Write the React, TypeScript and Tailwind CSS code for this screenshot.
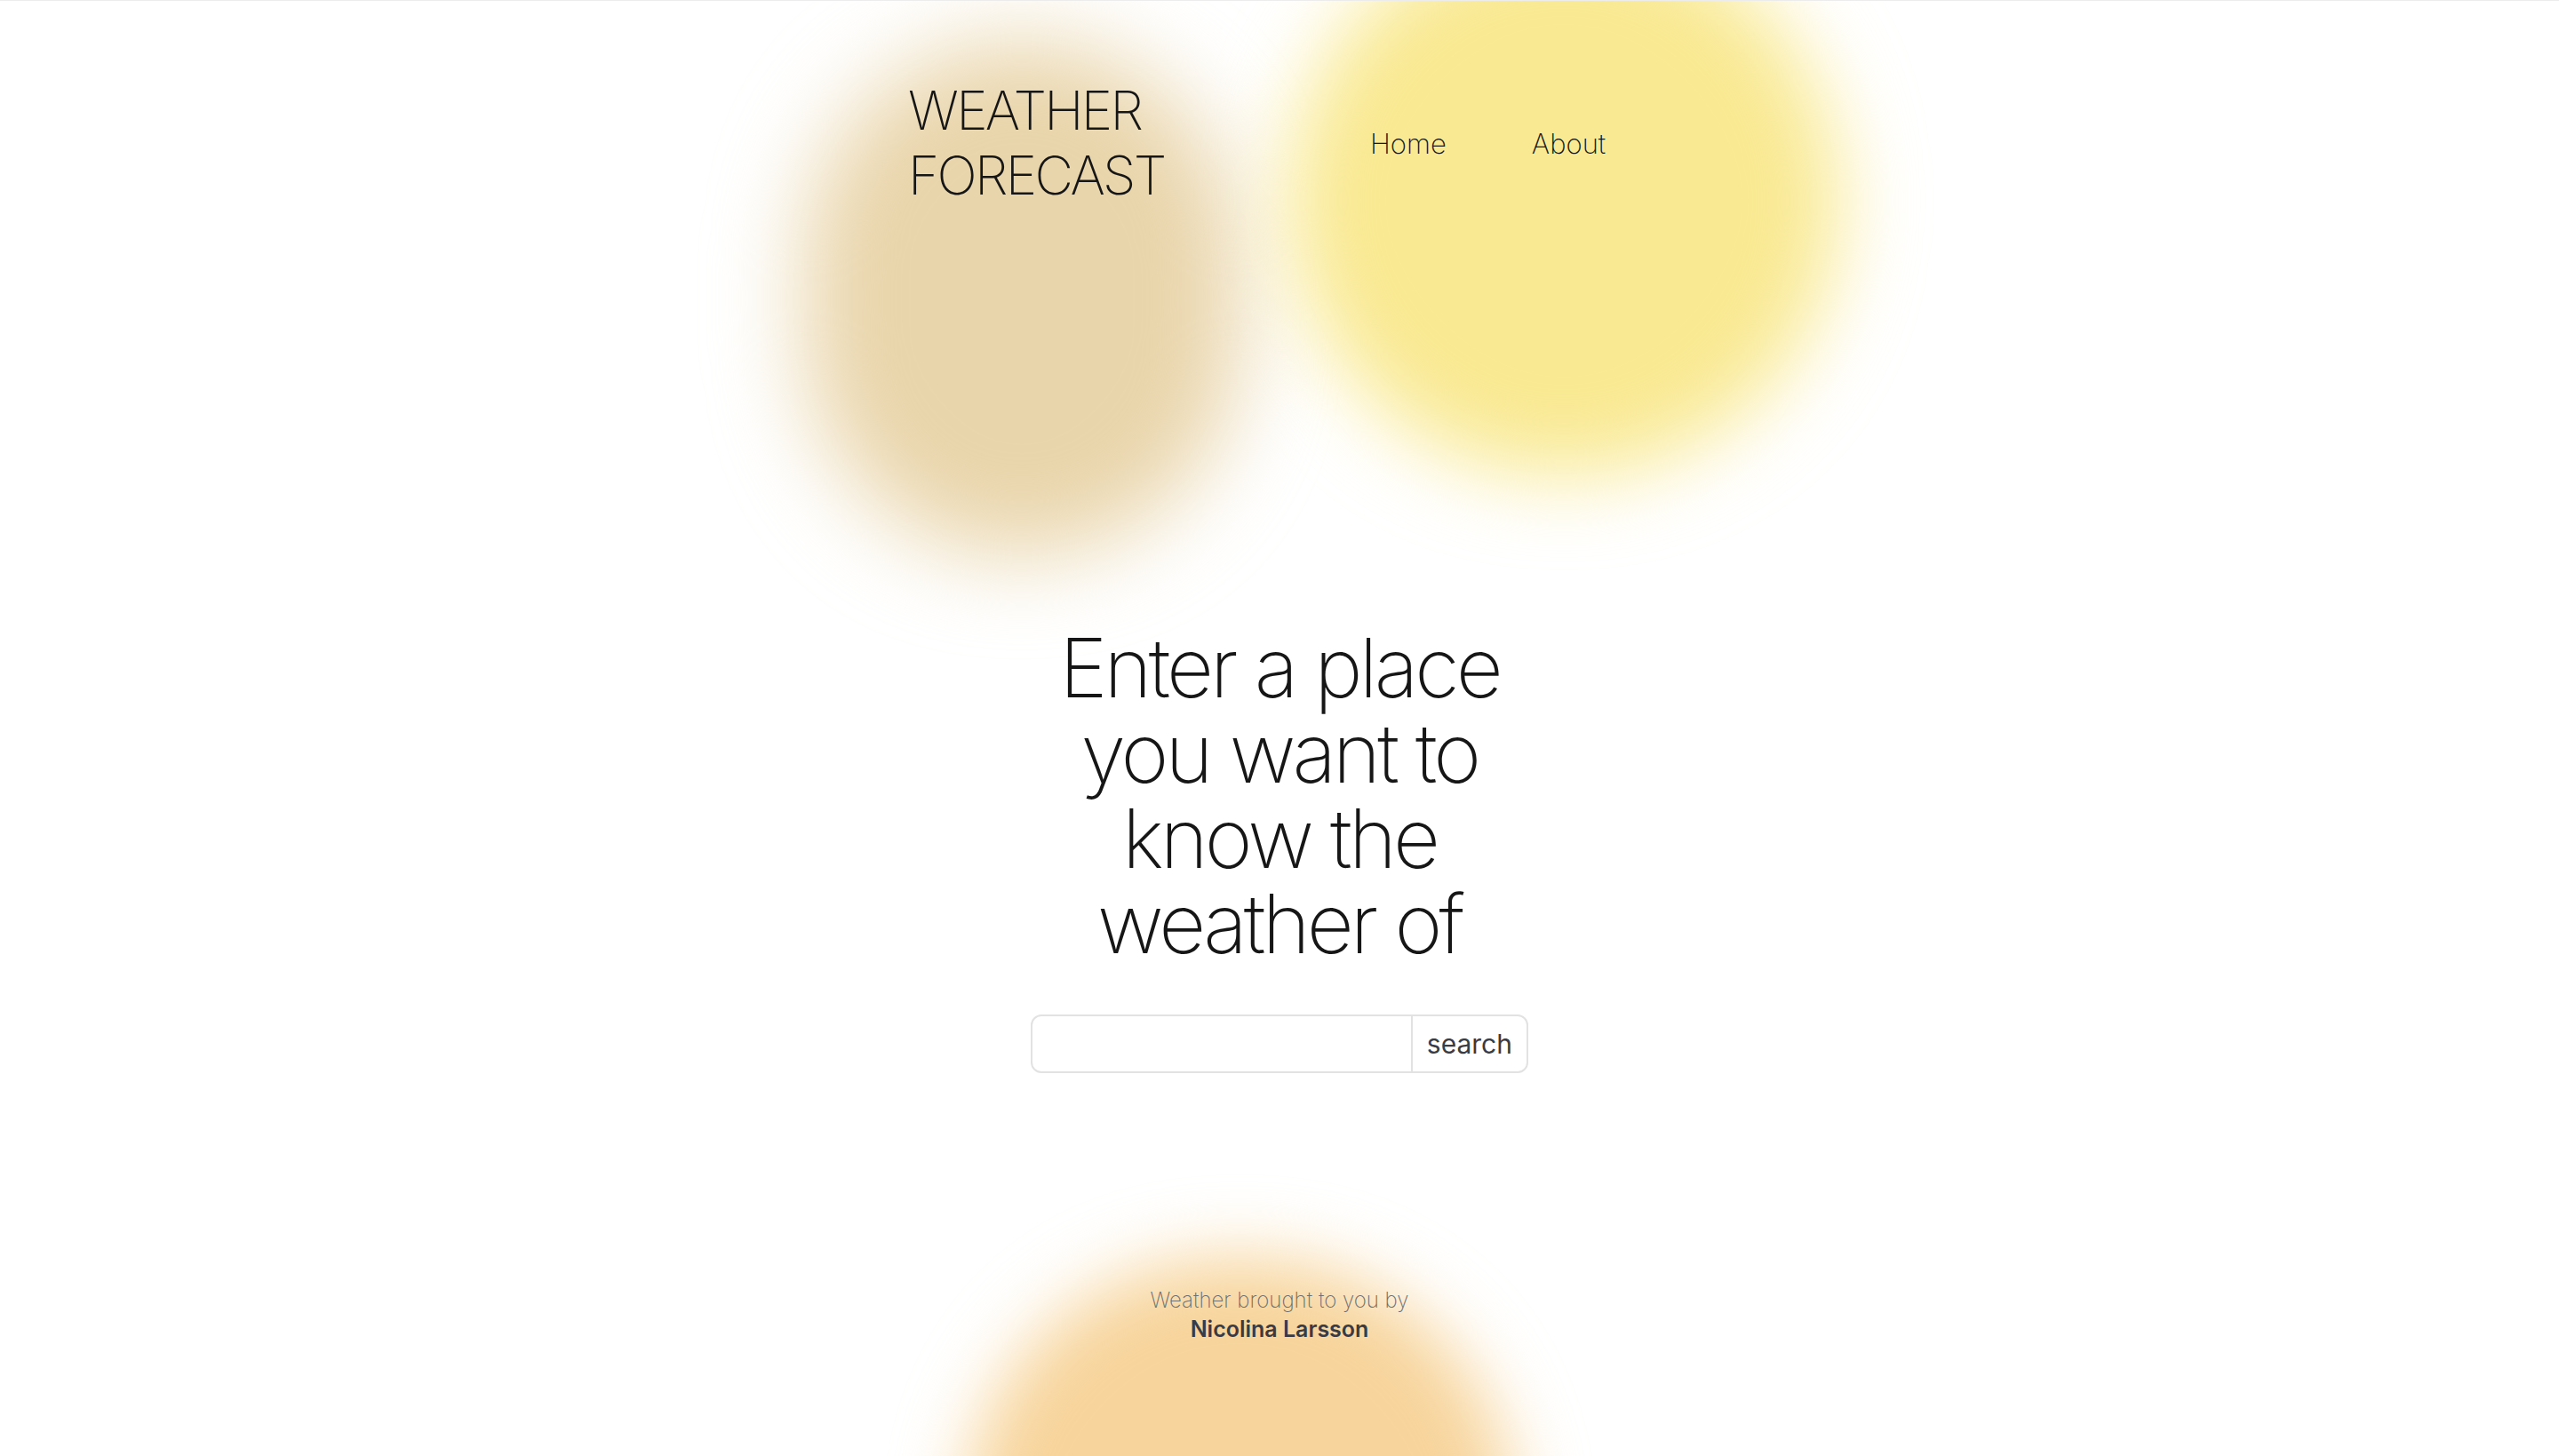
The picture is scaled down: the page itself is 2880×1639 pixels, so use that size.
export default function App() {
  return (
    <div className="relative min-h-screen overflow-hidden bg-white border-t border-[#ececec] font-['Inter',sans-serif] text-[#161616]">
      {/* blurred background blobs */}
      <div className="absolute left-[905px] top-[45px] w-[490px] h-[580px] rounded-full bg-[#e9d5ab] blur-[50px]" />
      <div className="absolute left-[1450px] top-[-85px] w-[620px] h-[620px] rounded-full bg-[#f9e992] blur-[45px]" />
      <div className="absolute left-[1085px] top-[1415px] w-[620px] h-[600px] rounded-full bg-[#f7d49b] blur-[40px]" />

      <div className="relative z-10 flex flex-col">
        <header className="flex items-center w-[836px] mx-auto pt-[87px]">
          <h1 className="w-[520px] text-[60px] leading-[73px] font-extralight tracking-[-0.045em]">
            <span className="block w-[320px]">WEATHER FORECAST</span>
          </h1>
          <nav className="flex gap-[96px] text-[31px] leading-none font-extralight">
            <a href="#">Home</a>
            <a href="#">About</a>
          </nav>
        </header>

        <main className="flex flex-col items-center">
          <h2 className="mt-[470px] w-[560px] text-center text-[92px] leading-[96px] font-extralight tracking-[-0.042em]">
            Enter a place you want to know the weather of
          </h2>

          <form className="mt-[54px] flex w-[560px] h-[66px] rounded-[12px] border-2 border-[#e2e2e2] bg-white overflow-hidden">
            <input type="text" className="flex-1 min-w-0 outline-none px-4 text-[28px]" />
            <button type="button" className="border-l-2 border-[#e2e2e2] px-[16px] text-[30px] text-[#3b3b43]">
              search
            </button>
          </form>
        </main>

        <footer className="mt-[240px] flex flex-col items-center text-[24px] leading-[32px]">
          <p className="font-extralight text-[#6e6e6e]">Weather brought to you by</p>
          <p className="text-[25px] font-semibold text-[#3a3a44]">Nicolina Larsson</p>
        </footer>
      </div>
    </div>
  );
}
